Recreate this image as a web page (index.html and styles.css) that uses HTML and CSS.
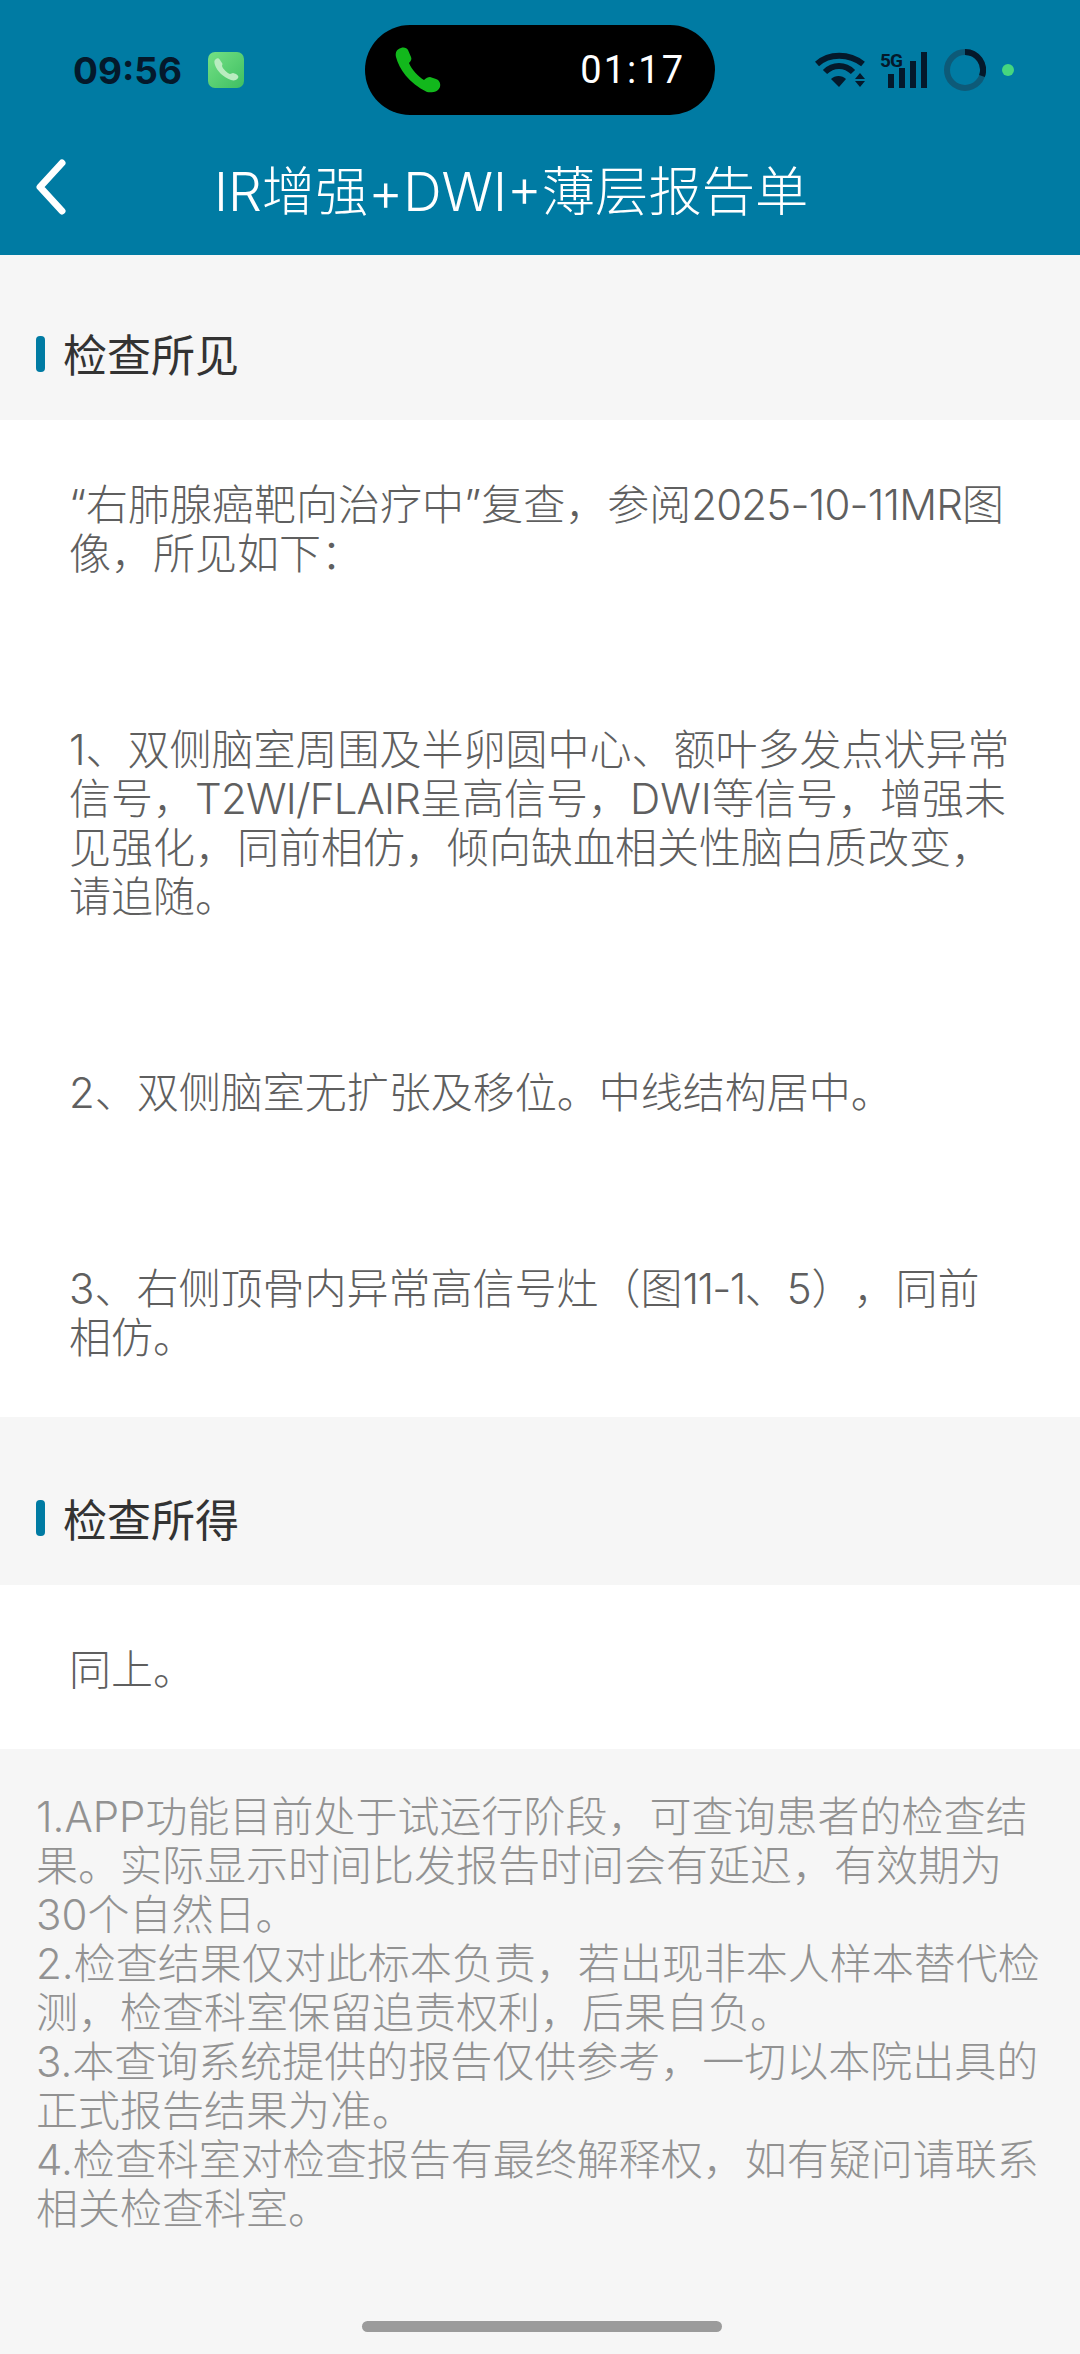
FILE: index.html
```html
<!DOCTYPE html>
<html>

<head>
  <title>报告单</title>
  <link rel="stylesheet" href="styles.css">
</head>

<body>
  <div class="top-bar">
    <div class="status-bar">
      <span class="clock">09:56</span>
      <div class="phone-app">
        <svg viewBox="0 0 36 36" width="36" height="36">
          <path class="handset-light" d="M8 7 C6 8 6 10 7 13 C9 19 15 25 23 28 C26 29 29 28 30 26 C31 25 30 23 28 22 L25 21 C24 21 23 22 22 22 C19 21 15 17 14 14 C14 13 15 12 14 11 L12 8 C11 6 9 6 8 7 Z"/>
        </svg>
      </div>
      <div class="call-pill">
        <svg viewBox="0 0 46 46" width="46" height="46">
          <path class="handset-green" d="M6 1 C2 2 0 5 1 10 C4 22 14 36 32 45 C37 46 43 45 45 40 C46 36 44 33 41 32 L35 30 C33 30 31 31 29 33 C24 30 16 22 14 16 C16 14 17 12 16 10 L13 3 C12 1 9 0 6 1 Z"/>
        </svg>
        <span class="call-time">01:17</span>
      </div>
      <div class="status-icons">
        <svg viewBox="0 0 50 36" width="50" height="36">
          <path class="wifi-arc" d="M2 12 C14 1 34 1 48 12"/>
          <path class="wifi-arc" d="M10 20 C18 12 30 12 38 20"/>
          <path class="wifi-fill" d="M16 27 C20 23 27 23 31 27 L24 35 Z"/>
          <path class="wifi-fill" d="M45 21 L50 27 L40 27 Z M40 29 L50 29 L45 35 Z"/>
        </svg>
        <div class="signal">
          <span class="signal-label">5G</span>
          <svg viewBox="0 0 39 36" width="39" height="36">
            <rect x="0" y="22" width="6" height="14"/>
            <rect x="11" y="16" width="6" height="20"/>
            <rect x="22" y="9" width="6" height="27"/>
            <rect x="33" y="0" width="6" height="36"/>
          </svg>
        </div>
        <svg class="battery" viewBox="0 0 42 42" width="42" height="42">
          <circle class="battery-track" cx="21" cy="21" r="18"/>
          <path class="battery-level" d="M21 3 A18 18 0 0 1 38 27"/>
        </svg>
        <span class="green-dot"></span>
      </div>
    </div>
    <div class="nav-bar">
      <svg class="back" viewBox="0 0 32 56" width="32" height="56">
        <path d="M27 4 L5 28 L27 52"/>
      </svg>
      <h1 class="nav-title">IR增强+DWI+薄层报告单</h1>
    </div>
  </div>

  <h2 class="section-title">检查所见</h2>
  <p class="section-text">“右肺腺癌靶向治疗中”复查，参阅<span class="tight">2025-10-11MR</span>图<br>像，所见如下：<br><br><br><br>1、双侧脑室周围及半卵圆中心、额叶多发点状异常<br>信号，<span class="tight">T2WI/FLAIR</span>呈高信号，DWI等信号，增强未<br>见强化，同前相仿，倾向缺血相关性脑白质改变，<br>请追随。<br><br><br><br>2、双侧脑室无扩张及移位。中线结构居中。<br><br><br><br>3、右侧顶骨内异常高信号灶（图<span class="tighter">11-1</span>、5），同前<br>相仿。</p>

  <h2 class="section-title second">检查所得</h2>
  <p class="section-text">同上。</p>

  <p class="notes">1.APP功能目前处于试运行阶段，可查询患者的检查结<br>果。实际显示时间比发报告时间会有延迟，有效期为<br>30个自然日。<br>2.检查结果仅对此标本负责，若出现非本人样本替代检<br>测，检查科室保留追责权利，后果自负。<br>3.本查询系统提供的报告仅供参考，一切以本院出具的<br>正式报告结果为准。<br>4.检查科室对检查报告有最终解释权，如有疑问请联系<br>相关检查科室。</p>

  <div class="home-indicator"></div>
</body>

</html>
```

FILE: styles.css
```css
* {
  box-sizing: border-box;
}

body {
  margin: 0;
  width: 1080px;
  height: 2354px;
  position: relative;
  overflow: hidden;
  background-color: #f6f6f6;
  font-family: Inter, "Noto Sans CJK SC", sans-serif;
  text-spacing-trim: space-all;
}

.top-bar {
  height: 255px;
  background-color: #007ba3;
}

.status-bar {
  height: 140px;
  display: flex;
  align-items: center;
  padding-left: 73px;
}

.clock {
  width: 135px;
  font-size: 37px;
  font-weight: 700;
  color: #04192b;
}

.phone-app {
  width: 36px;
  height: 36px;
  border-radius: 7px;
  background: linear-gradient(135deg, #74e084, #3ebf62);
}

.handset-light {
  fill: #b9ecc0;
}

.call-pill {
  width: 350px;
  height: 90px;
  margin-left: 121px;
  padding: 0 30px;
  border-radius: 45px;
  background-color: #000;
  display: flex;
  align-items: center;
  justify-content: space-between;
}

.handset-green {
  fill: #12b81c;
}

.call-time {
  font-family: Roboto, sans-serif;
  font-size: 38px;
  letter-spacing: 2px;
  color: #fff;
}

.status-icons {
  display: flex;
  align-items: center;
  margin-left: 100px;
}

.wifi-arc {
  fill: none;
  stroke: #04192b;
  stroke-width: 6;
}

.wifi-fill {
  fill: #04192b;
}

.signal {
  width: 39px;
  height: 36px;
  margin-left: 23px;
  position: relative;
}

.signal rect {
  fill: #04192b;
}

.signal-label {
  position: absolute;
  left: -8px;
  top: 0;
  font-family: Roboto, sans-serif;
  font-size: 19px;
  font-weight: 700;
  line-height: 18px;
  letter-spacing: -1px;
  color: #04192b;
}

.battery {
  margin-left: 17px;
}

.battery-track {
  fill: none;
  stroke: #0d5a78;
  stroke-width: 6;
}

.battery-level {
  fill: none;
  stroke: #04192b;
  stroke-width: 6;
}

.green-dot {
  width: 12px;
  height: 12px;
  margin-left: 16px;
  border-radius: 50%;
  background-color: #45d67f;
}

.nav-bar {
  height: 115px;
  display: flex;
  align-items: center;
  padding: 0 0 21px 35px;
}

.back {
  width: 32px;
  height: 56px;
}

.back path {
  fill: none;
  stroke: #fff;
  stroke-width: 7;
  stroke-linecap: round;
  stroke-linejoin: round;
}

.nav-title {
  margin: 0 0 0 147px;
  font-size: 53.3px;
  font-weight: 300;
  color: #fff;
}

.section-title {
  height: 165px;
  margin: 0;
  padding: 61px 0 0 63px;
  font-size: 44px;
  font-weight: 400;
  line-height: 80px;
  color: #333;
  position: relative;
}

.section-title::before {
  content: "";
  position: absolute;
  left: 36px;
  top: 81px;
  width: 9px;
  height: 36px;
  border-radius: 4px;
  background-color: #007ba3;
}

.section-title.second {
  height: 168px;
  padding-top: 64px;
}

.section-title.second::before {
  top: 83px;
}

.section-text {
  margin: 0;
  padding: 60px 0 55px 69px;
  font-size: 42px;
  font-weight: 300;
  line-height: 49px;
  color: #5f5f5f;
  background-color: #fff;
}

.tight {
  letter-spacing: -0.8px;
}

.tighter {
  letter-spacing: -1.6px;
}

.notes {
  margin: 0;
  padding: 43px 0 0 36px;
  font-size: 42px;
  font-weight: 300;
  line-height: 49px;
  color: #929292;
}

.home-indicator {
  position: absolute;
  left: 362px;
  top: 2321px;
  width: 360px;
  height: 11px;
  border-radius: 6px;
  background-color: #9b9b9b;
}
```
